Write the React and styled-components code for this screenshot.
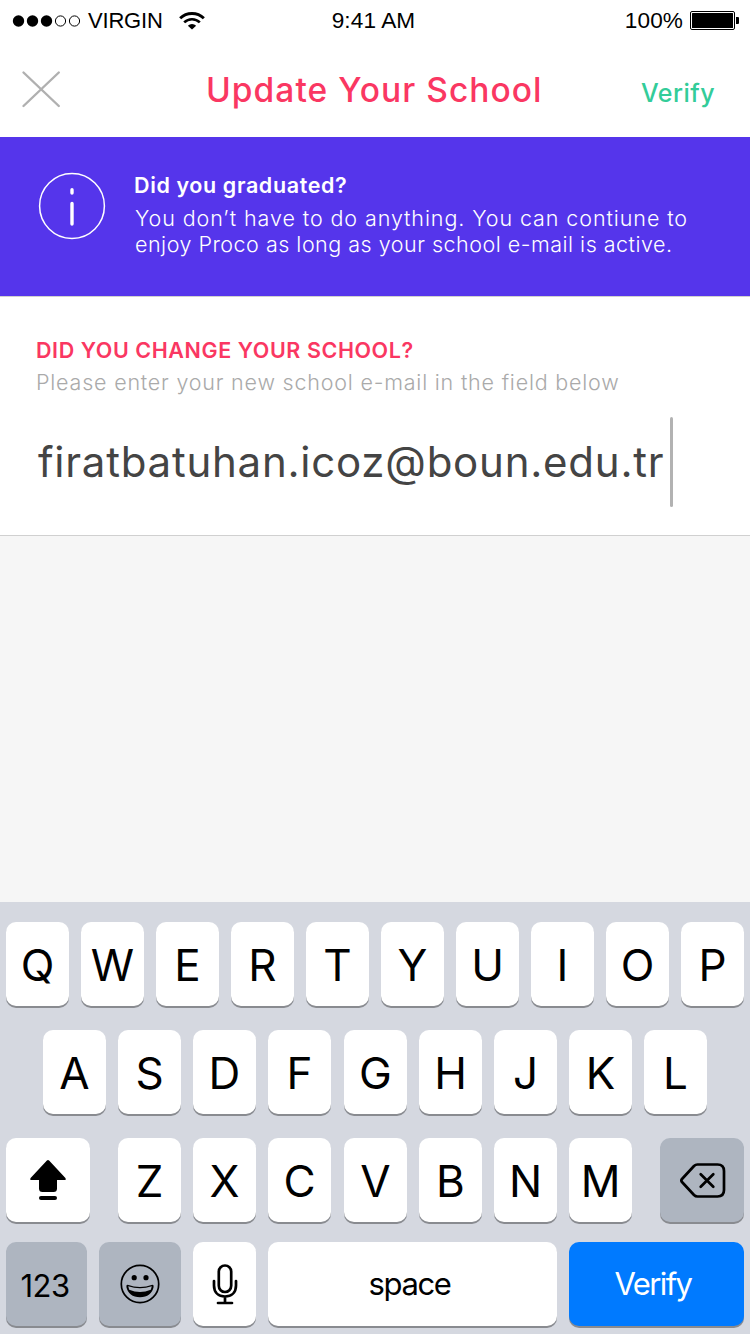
import React from "react";
import styled, { createGlobalStyle } from "styled-components";

const Global = createGlobalStyle`
  * { box-sizing: border-box; }
  body { margin: 0; background: #f6f6f6; }
  button { border: 0; margin: 0; padding: 0; background: none; font: inherit; color: inherit; }
  svg { display: block; flex: none; }
`;

const Screen = styled.main`
  display: flex;
  flex-direction: column;
  width: 750px;
  height: 1334px;
  overflow: hidden;
  background: #f6f6f6;
  font-family: Inter, "Liberation Sans", sans-serif;
`;

const StatusBar = styled.header`
  display: grid;
  grid-template-columns: 1fr auto 1fr;
  align-items: center;
  height: 41px;
  padding: 0 11px 0 12px;
  background: #fff;
  color: #000;
  font: 22.6px/41px "Liberation Sans", Arial, sans-serif;
  letter-spacing: 0.1px;
`;

const StatusGroup = styled.div`
  display: flex;
  align-items: center;
  justify-content: ${(p) => (p.$end ? "flex-end" : "flex-start")};
  gap: ${(p) => p.$gap}px;
`;

const StatusText = styled.span`
  padding-top: 1px;
  line-height: 40px;
`;

const Clock = styled(StatusText)`
  margin-right: 4px;
`;

const Carrier = styled(StatusText)`
  margin-right: 9px;
  font-size: 22px;
  letter-spacing: -0.2px;
`;

const NavBar = styled.nav`
  display: grid;
  grid-template-columns: 150px 1fr 150px;
  height: 96px;
  background: #fff;
`;

const CloseButton = styled.button`
  justify-self: start;
  align-self: start;
  padding: 29px 0 0 21px;
`;

const Line = styled.span`
  display: block;
  white-space: nowrap;
  font-size: ${(p) => p.$size}px;
  line-height: ${(p) => p.$lh}px;
  font-weight: ${(p) => p.$weight || 400};
  letter-spacing: ${(p) => p.$track || 0}px;
  color: ${(p) => p.$color};
`;

const Title = styled.h1`
  margin: 0;
  padding: 29px 0 0 56px;
`;

const NavAction = styled.button`
  align-self: start;
  padding: 32px 0 0 41px;
  text-align: left;
`;

const Notice = styled.section`
  display: flex;
  gap: 28px;
  height: 160px;
  padding: 35px 0 0 38px;
  background: #5535eb;
  border-bottom: 1px solid #d0d0d0;
`;

const NoticeText = styled.div`
  display: flex;
  flex-direction: column;
`;

const NoticeBody = styled.div`
  padding: 6px 0 0 1px;
`;

const Form = styled.section`
  height: 239px;
  padding: 39px 0 0 36px;
  background: #fff;
  border-bottom: 1px solid #d0d0d0;
`;

const Field = styled.div`
  display: flex;
  align-items: center;
  height: 90px;
  margin-top: 17px;
  padding-left: 2px;
`;

const Caret = styled.i`
  width: 3px;
  height: 90px;
  margin-left: 6px;
  border-radius: 1.5px;
  background: #b2b2b2;
`;

const Keyboard = styled.section`
  display: flex;
  flex-direction: column;
  gap: 24px;
  height: 432px;
  margin-top: auto;
  padding-top: 20px;
  background: #d5d8e0;
`;

const KeyRow = styled.div`
  display: flex;
  gap: 12px;
  padding-left: ${(p) => p.$inset || 6}px;
  margin-top: ${(p) => p.$shift || 0}px;
`;

const tones = {
  light: ["#fff", "#000"],
  dark: ["#aeb5c0", "#000"],
  action: ["#007aff", "#fff"],
};

const Key = styled.button`
  display: flex;
  align-items: center;
  justify-content: center;
  flex: none;
  width: ${(p) => p.$w || 63}px;
  height: 84px;
  margin-left: ${(p) => p.$ml || 0}px;
  padding-top: ${(p) => p.$drop ?? 2}px;
  padding-left: ${(p) => p.$padL || 0}px;
  padding-right: ${(p) => p.$padR || 0}px;
  border-radius: 10px;
  background: ${(p) => tones[p.$tone || "light"][0]};
  color: ${(p) => tones[p.$tone || "light"][1]};
  box-shadow: 0 2px 0 #898b90;
  font-size: ${(p) => p.$size || 44}px;
  line-height: 1.2;
  letter-spacing: ${(p) => p.$track || 0}px;
`;

const Signal = () => (
  <svg width="69" height="14" viewBox="0 0 69 14">
    {[0, 1, 2, 3, 4].map((i) => (
      <circle key={i} cx={6.5 + i * 14} cy="7" r={i < 3 ? 5.7 : 5.1}
        fill={i < 3 ? "#000" : "none"} stroke="#000" strokeWidth={i < 3 ? 0 : 1} />
    ))}
  </svg>
);

const Wifi = () => (
  <svg width="26" height="18" viewBox="0 0 27 19" preserveAspectRatio="none" fill="none" stroke="#000">
    <path d="M1.2 6.7A17.4 17.4 0 0 1 25.8 6.7" strokeWidth="3" />
    <path d="M5.4 11A11.5 11.5 0 0 1 21.6 11" strokeWidth="2.7" />
    <path d="M13.5 18.5 9.2 14.4A6.2 6.2 0 0 1 17.8 14.4Z" fill="#000" stroke="none" />
  </svg>
);

const Battery = () => (
  <svg width="49" height="19" viewBox="0 0 49 19">
    <rect x=".5" y=".5" width="44" height="18" rx="1.5" fill="none" stroke="#000" />
    <rect x="2" y="2" width="41" height="15" rx=".5" />
    <path d="M46 6h2q1 0 1 1v5q0 1-1 1h-2z" />
  </svg>
);

const CloseIcon = () => (
  <svg width="40" height="38" viewBox="0 0 40 38" stroke="#b0b0b0" strokeWidth="2.4" strokeLinecap="round">
    <path d="M2.5 2.5 37.8 36M37.8 2.5 2.5 36" />
  </svg>
);

const InfoIcon = () => (
  <svg width="68" height="68" viewBox="0 0 68 68" fill="none" stroke="#fff">
    <circle cx="34" cy="34" r="32.4" strokeWidth="1.5" />
    <path d="M34 17.7v3.3M34 31.5v20.5" strokeWidth="3.4" strokeLinecap="round" />
  </svg>
);

const ShiftIcon = () => (
  <svg width="36" height="40" viewBox="0 0 36 40">
    <path d="M16.9.6q1.1-1 2.2 0L35.4 18q1.1 2-1 2H27v8.5q0 3.5-3.5 3.5h-11Q9 32 9 28.5V20H1.6q-2.1 0-1-2z" />
    <rect x="9" y="36" width="18" height="4" rx="2" />
  </svg>
);

const BackspaceIcon = () => (
  <svg width="46" height="35" viewBox="0 0 46 35" fill="none" stroke="#000" strokeWidth="2.7" strokeLinecap="round" strokeLinejoin="round">
    <path d="M17.5 1.5H37.5Q44 1.5 44 8V27Q44 33.5 37.5 33.5H17.5Q15.5 33.5 14 32L2 19Q.7 17.5 2 16L14 3Q15.5 1.5 17.5 1.5Z" />
    <path d="M20.7 11.2 33.3 23.8M33.3 11.2 20.7 23.8" />
  </svg>
);

const EmojiIcon = () => (
  <svg width="40" height="40" viewBox="0 0 40 40">
    <circle cx="20" cy="20" r="18.7" fill="none" stroke="#000" strokeWidth="1.7" />
    <circle cx="14.2" cy="13.7" r="2.6" />
    <circle cx="26" cy="13.7" r="2.6" />
    <path d="M7.6 20.8Q20 25.3 32.4 20.8Q33.9 20.7 33.6 23C32.3 29.5 27.5 33.2 20 33.2S7.7 29.5 6.4 23Q6.1 20.7 7.6 20.8Z" />
    <path d="M8.2 22.2Q20 26.3 31.8 22.2L30.8 25.8Q20 30.3 9.2 25.8Z" fill="#aeb5c0" />
  </svg>
);

const MicIcon = () => (
  <svg width="26" height="41" viewBox="0 0 26 41" fill="none" stroke="#000" strokeWidth="2.7" strokeLinecap="round">
    <rect x="6.8" y="1.5" width="12.4" height="26.5" rx="6.2" />
    <path d="M2 17V21.5C2 28.5 6.5 32.5 13 32.5S24 28.5 24 21.5V17M13 33V39M6 39H20" />
  </svg>
);

export default function App() {
  return (
    <Screen>
      <Global />
      <StatusBar>
        <StatusGroup $gap={7}>
          <Signal />
          <Carrier>VIRGIN</Carrier>
          <Wifi />
        </StatusGroup>
        <Clock>9:41 AM</Clock>
        <StatusGroup $gap={7} $end>
          <StatusText>100%</StatusText>
          <Battery />
        </StatusGroup>
      </StatusBar>

      <NavBar>
        <CloseButton aria-label="Close"><CloseIcon /></CloseButton>
        <Title>
          <Line $size={33.5} $lh={40} $weight={500} $track={1.05} $color="#fa3762">Update Your School</Line>
        </Title>
        <NavAction>
          <Line $size={25} $lh={40} $weight={500} $track={0.5} $color="#33cc99">Verify</Line>
        </NavAction>
      </NavBar>

      <Notice>
        <InfoIcon />
        <NoticeText>
          <Line $size={21.5} $lh={27} $weight={600} $track={0.62} $color="#fff">Did you graduated?</Line>
          <NoticeBody>
            <Line $size={21.5} $lh={26} $weight={300} $track={0.91} $color="#fff">You don’t have to do anything. You can contiune to</Line>
            <Line $size={21.5} $lh={26} $weight={300} $track={0.5} $color="#fff">enjoy Proco as long as your school e-mail is active.</Line>
          </NoticeBody>
        </NoticeText>
      </Notice>

      <Form>
        <Line $size={21.5} $lh={28} $weight={600} $track={0.58} $color="#fa3762">DID YOU CHANGE YOUR SCHOOL?</Line>
        <Line $size={21.5} $lh={36} $weight={300} $track={0.79} $color="#aaa">Please enter your new school e-mail in the field below</Line>
        <Field>
          <Line $size={42} $lh={52} $weight={400} $track={0.76} $color="#444">firatbatuhan.icoz@boun.edu.tr</Line>
          <Caret />
        </Field>
      </Form>

      <Keyboard>
        <KeyRow>
          {[..."QWERTYUIOP"].map((c) => <Key key={c}>{c}</Key>)}
        </KeyRow>
        <KeyRow $inset={43}>
          {[..."ASDFGHJKL"].map((c) => <Key key={c} $ml={c === "G" ? 1 : 0}>{c}</Key>)}
        </KeyRow>
        <KeyRow>
          <Key $w={84} $drop={0} aria-label="Shift"><ShiftIcon /></Key>
          {[..."ZXCVBNM"].map((c) => <Key key={c} $ml={c === "Z" ? 16 : c === "V" ? 1 : 0}>{c}</Key>)}
          <Key $w={84} $ml={16} $tone="dark" $drop={0} $padL={2} aria-label="Delete"><BackspaceIcon /></Key>
        </KeyRow>
        <KeyRow $shift={-4}>
          <Key $w={81} $tone="dark" $size={31} $drop={4} $track={-0.5} $padR={3}>123</Key>
          <Key $w={82} $tone="dark" $drop={0} $padR={1} aria-label="Emoji"><EmojiIcon /></Key>
          <Key $drop={1} aria-label="Dictate"><MicIcon /></Key>
          <Key $w={289} $size={31} $drop={0} $track={-1.4} $padR={6}>space</Key>
          <Key $w={175} $size={31} $drop={0} $tone="action" $track={-1.6} $padR={7}>Verify</Key>
        </KeyRow>
      </Keyboard>
    </Screen>
  );
}
